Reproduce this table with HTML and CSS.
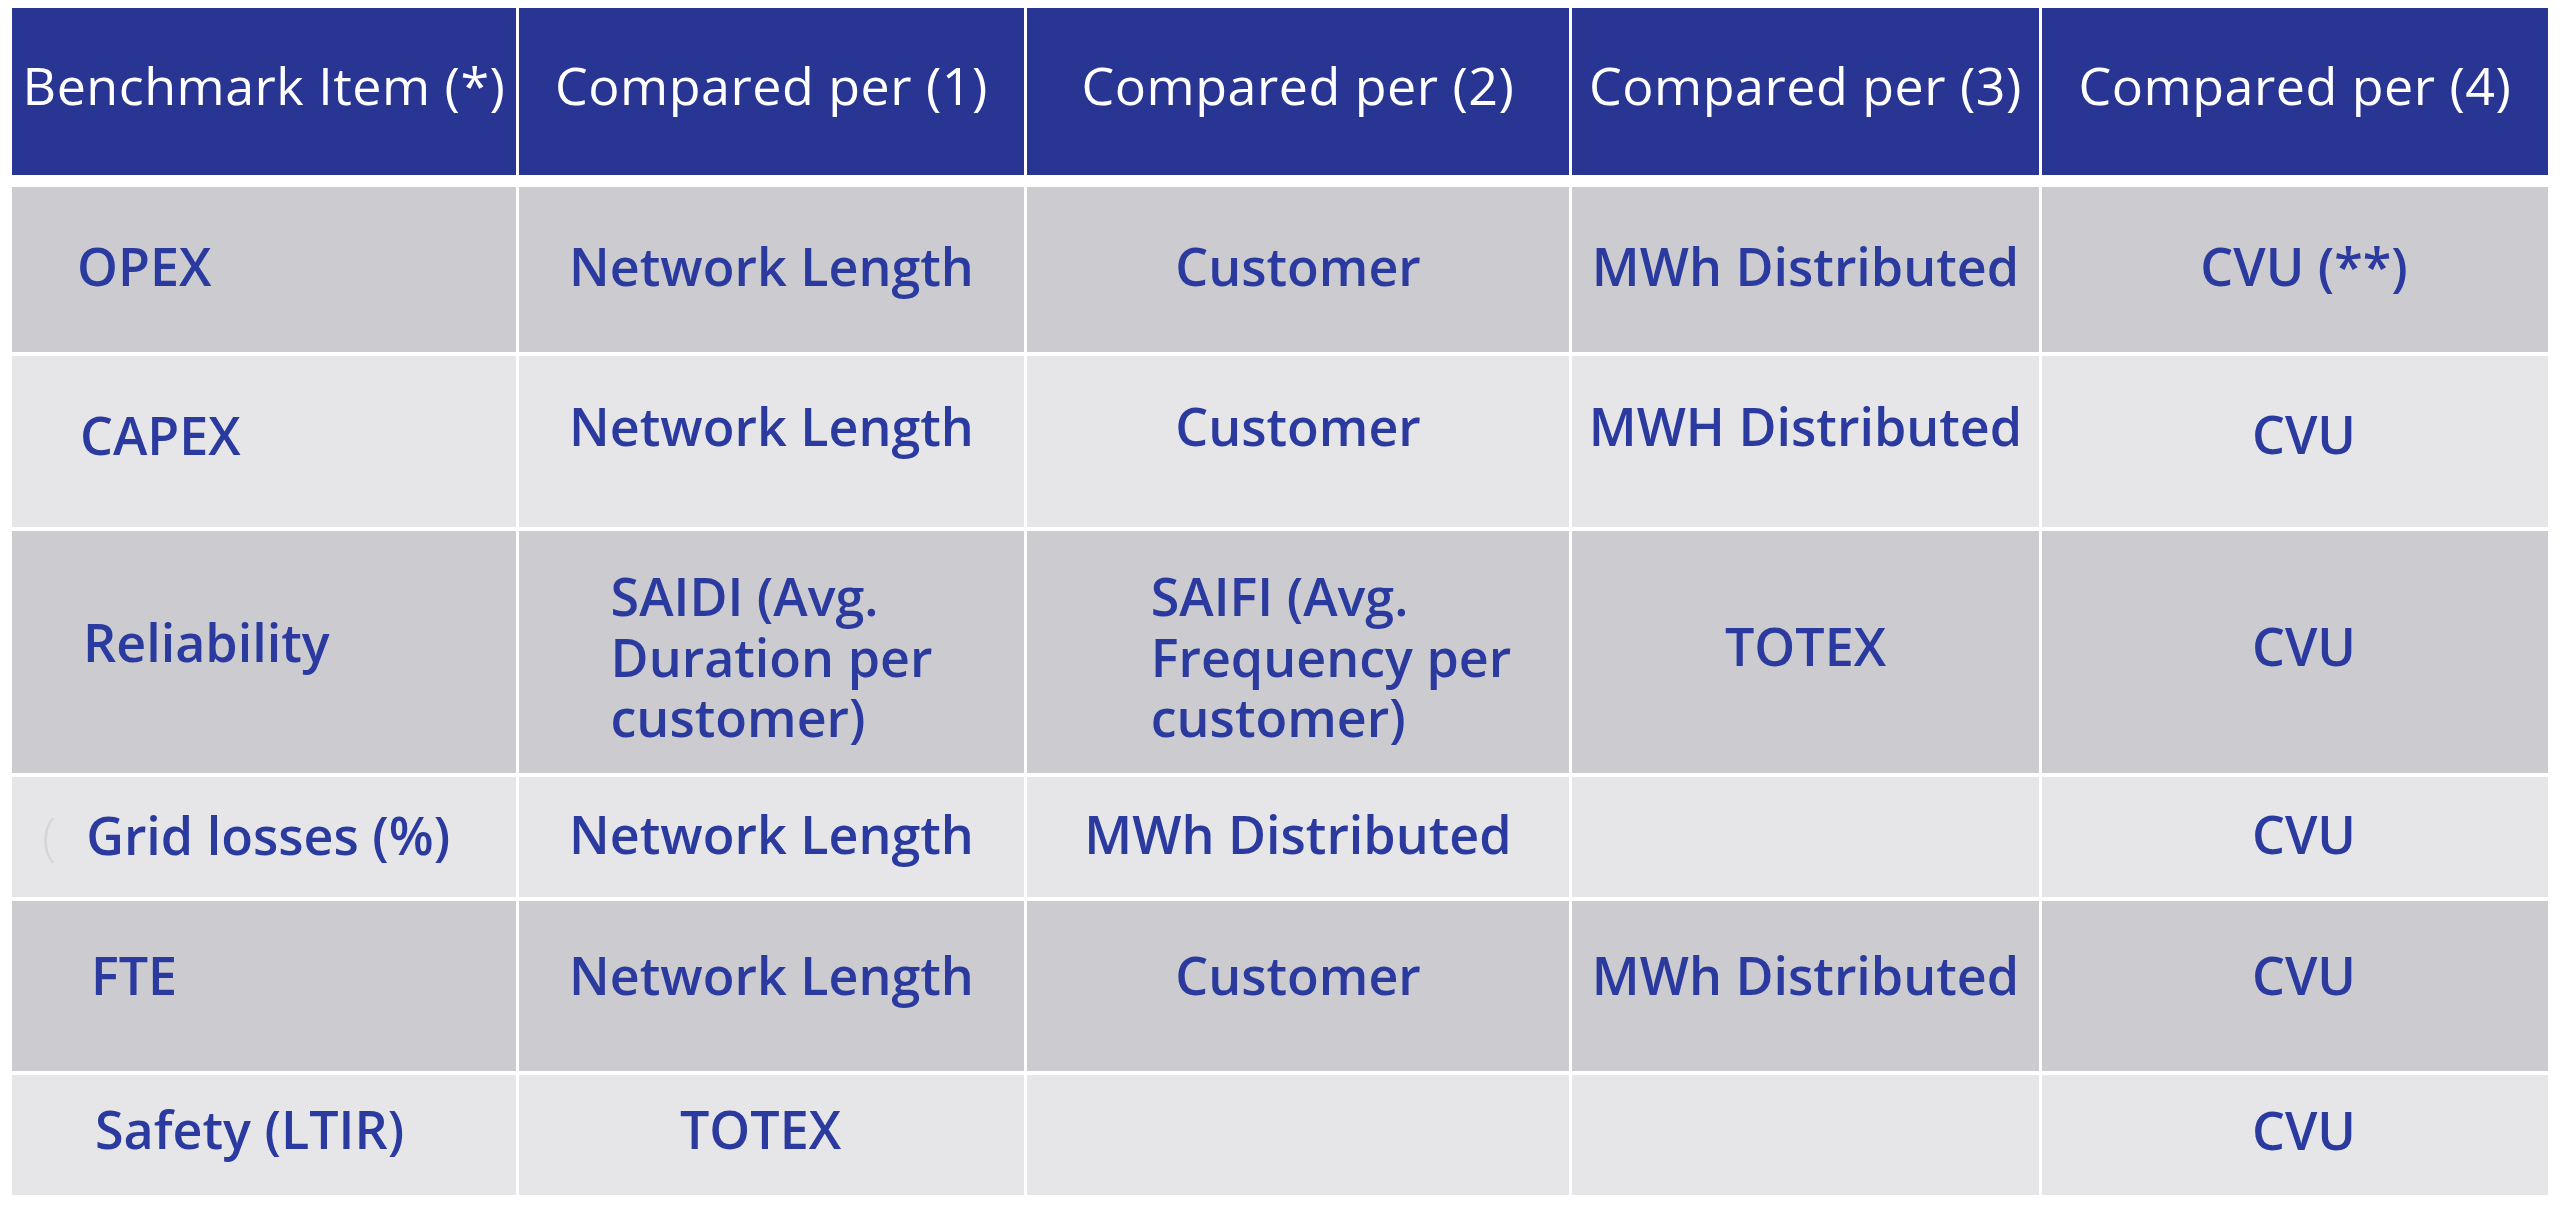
FILE: index.html
```html
<!DOCTYPE html>
<html lang="en">
<head>
<meta charset="utf-8">
<title>Benchmark Items</title>
<link rel="stylesheet" href="styles.css">
</head>
<body>
<main class="page">
  <div class="grid head">
    <div class="cell hcell">Benchmark Item (*)</div>
    <div class="cell hcell">Compared per (1)</div>
    <div class="cell hcell">Compared per (2)</div>
    <div class="cell hcell">Compared per (3)</div>
    <div class="cell hcell">Compared per (4)</div>
  </div>
  <div class="grid body">
    <div class="cell dark item r1">OPEX</div>
    <div class="cell dark">Network Length</div>
    <div class="cell dark">Customer</div>
    <div class="cell dark">MWh Distributed</div>
    <div class="cell dark c4">CVU (**)</div>

    <div class="cell light item r2">CAPEX</div>
    <div class="cell light up">Network Length</div>
    <div class="cell light up">Customer</div>
    <div class="cell light up">MWH Distributed</div>
    <div class="cell light c4 r2b">CVU</div>

    <div class="cell dark item r3">Reliability</div>
    <div class="cell dark multi-cell"><span class="multi">SAIDI (Avg.<br>Duration per<br>customer)</span></div>
    <div class="cell dark multi-cell"><span class="multi saifi">SAIFI (Avg.<br>Frequency per<br>customer)</span></div>
    <div class="cell dark r3b">TOTEX</div>
    <div class="cell dark c4 r3b">CVU</div>

    <div class="cell light item r4"><span class="ghost">(</span>Grid losses (%)</div>
    <div class="cell light">Network Length</div>
    <div class="cell light">MWh Distributed</div>
    <div class="cell light"></div>
    <div class="cell light c4">CVU</div>

    <div class="cell dark item r5">FTE</div>
    <div class="cell dark r5b">Network Length</div>
    <div class="cell dark r5b">Customer</div>
    <div class="cell dark r5b">MWh Distributed</div>
    <div class="cell dark c4 r5b">CVU</div>

    <div class="cell light item r6">Safety (LTIR)</div>
    <div class="cell light totex">TOTEX</div>
    <div class="cell light"></div>
    <div class="cell light"></div>
    <div class="cell light c4 r6b">CVU</div>
  </div>
</main>
</body>
</html>
```
FILE: styles.css
```css
html, body {
  margin: 0;
  padding: 0;
  background: #ffffff;
}

.page {
  padding: 8px 12px 0 12px;
  font-family: "Open Sans", "Noto Sans", "Liberation Sans", sans-serif;
  font-size: 52px;
  line-height: 1.17;
}

.grid {
  display: grid;
  grid-template-columns: 504px 505px 542px 467px 506px;
  column-gap: 3px;
}

.head {
  grid-template-rows: 167px;
  margin-bottom: 12px;
}

.body {
  grid-template-rows: 165px 171px 242px 120px 170px 120px;
  row-gap: 4px;
}

.cell {
  display: flex;
  align-items: center;
  justify-content: center;
  white-space: nowrap;
  letter-spacing: 0.5px;
  padding-bottom: 6px;
}

.hcell {
  background: #283593;
  color: #ffffff;
  padding-bottom: 12px;
}

.dark,
.light {
  color: #2b3a9e;
  font-weight: 600;
  letter-spacing: 0;
}

.dark { background: #cbcbd0; }
.light { background: #e6e6e9; }

.item {
  justify-content: flex-start;
}

.up { padding-bottom: 30px; }

.r1 { padding-left: 65px; }
.r2 { padding-left: 68px; padding-bottom: 12px; }
.r2b { padding-bottom: 14px; }
.r3 { padding-left: 71px; padding-bottom: 20px; }
.r3b { padding-bottom: 12px; }
.multi-cell { padding-top: 10px; padding-bottom: 0; }
.r4 { padding-left: 30px; padding-bottom: 4px; }
.r5 { padding-left: 79px; padding-bottom: 22px; }
.r5b { padding-bottom: 22px; }
.r6 { padding-left: 83px; padding-bottom: 12px; }
.r6b { padding-bottom: 10px; }

.ghost {
  color: #d6d6da;
  font-weight: 300;
  margin-right: 30px;
}

.totex {
  padding-right: 22px;
  padding-bottom: 12px;
}

.c4 {
  padding-left: 18px;
}

.multi {
  display: block;
  text-align: left;
}

.saifi {
  margin-left: 66px;
}
```
